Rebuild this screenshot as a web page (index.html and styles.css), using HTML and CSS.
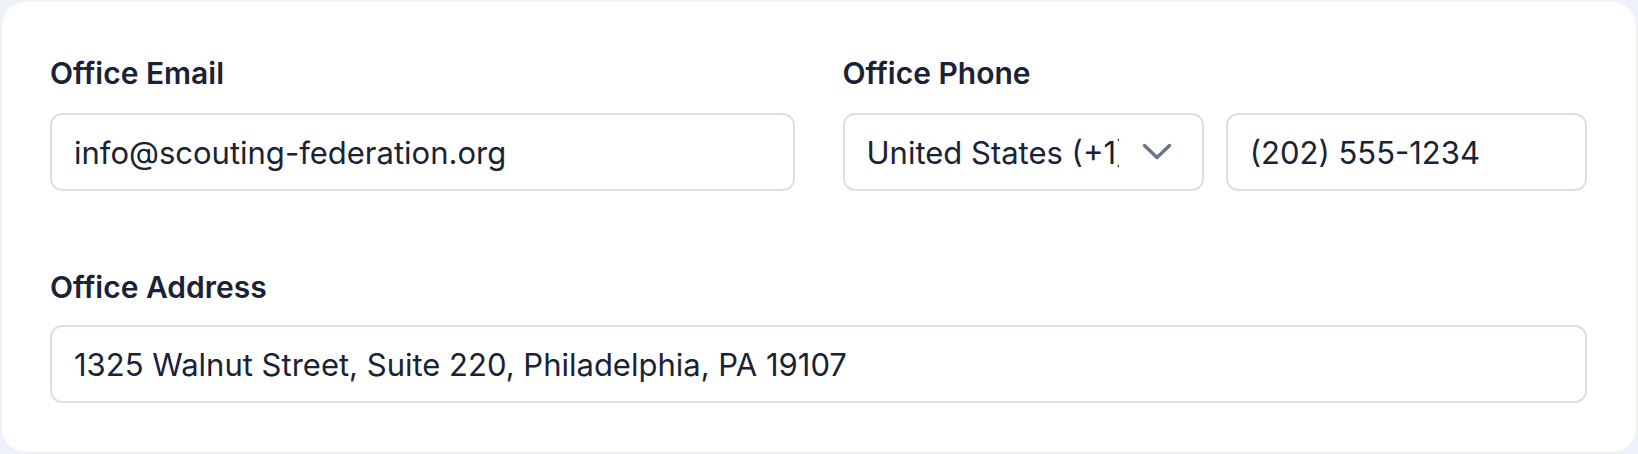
FILE: index.html
```html
<!DOCTYPE html>
<html lang="en">
<head>
<meta charset="utf-8">
<title>Office Contact</title>
<link rel="stylesheet" href="styles.css">
</head>
<body>
<div class="card">
  <div class="row two">
    <div class="field">
      <label class="label" for="email">Office Email</label>
      <input id="email" class="input" type="text" value="info@scouting-federation.org">
    </div>
    <div class="field">
      <span class="label">Office Phone</span>
      <div class="phone">
        <div class="select">
          <span class="select-text">United States (+1)</span>
          <svg class="chev" width="30" height="18" viewBox="0 0 30 18"><path d="M2.5 2.5 L15 14.5 L27.5 2.5" fill="none" stroke="#6a738a" stroke-width="3.4" stroke-linecap="round" stroke-linejoin="round"/></svg>
        </div>
        <input class="input" type="text" value="(202) 555-1234">
      </div>
    </div>
  </div>
  <div class="row">
    <div class="field">
      <label class="label label-addr" for="addr">Office Address</label>
      <input id="addr" class="input" type="text" value="1325 Walnut Street, Suite 220, Philadelphia, PA 19107">
    </div>
  </div>
</div>
</body>
</html>
```
FILE: styles.css
```css
html, body {
  margin: 0;
  padding: 0;
}
body {
  background: #eef1fa;
  padding: 2px;
  font-family: Inter, "Noto Sans", sans-serif;
  color: #1a2236;
}
.card {
  background: #ffffff;
  border-radius: 24px;
  padding: 51px 49px 49px 48px;
  display: flex;
  flex-direction: column;
  gap: 76px;
}
.row.two {
  display: grid;
  grid-template-columns: 1fr 1fr;
  gap: 48px;
}
.field {
  display: flex;
  flex-direction: column;
  min-width: 0;
}
.label {
  font-size: 30px;
  font-weight: 600;
  line-height: 40px;
  margin-bottom: 20px;
  color: #1a2236;
}
.label-addr {
  margin-bottom: 18px;
}
.input {
  box-sizing: border-box;
  height: 78px;
  width: 100%;
  border: 2px solid #dcdfe5;
  border-radius: 12px;
  padding: 0 22px;
  font-family: Inter, "Noto Sans", sans-serif;
  font-size: 31px;
  color: #1a2236;
  background: #fff;
  outline: none;
  margin: 0;
}
.phone {
  display: grid;
  grid-template-columns: 1fr 1fr;
  gap: 22px;
}
.select {
  box-sizing: border-box;
  height: 78px;
  border: 2px solid #dcdfe5;
  border-radius: 12px;
  padding: 0 30px 0 22px;
  display: flex;
  align-items: center;
  gap: 23px;
  min-width: 0;
}
.select-text {
  flex: 1;
  min-width: 0;
  overflow: hidden;
  white-space: nowrap;
  font-size: 31px;
  color: #1a2236;
}
.chev {
  flex: none;
}
```
